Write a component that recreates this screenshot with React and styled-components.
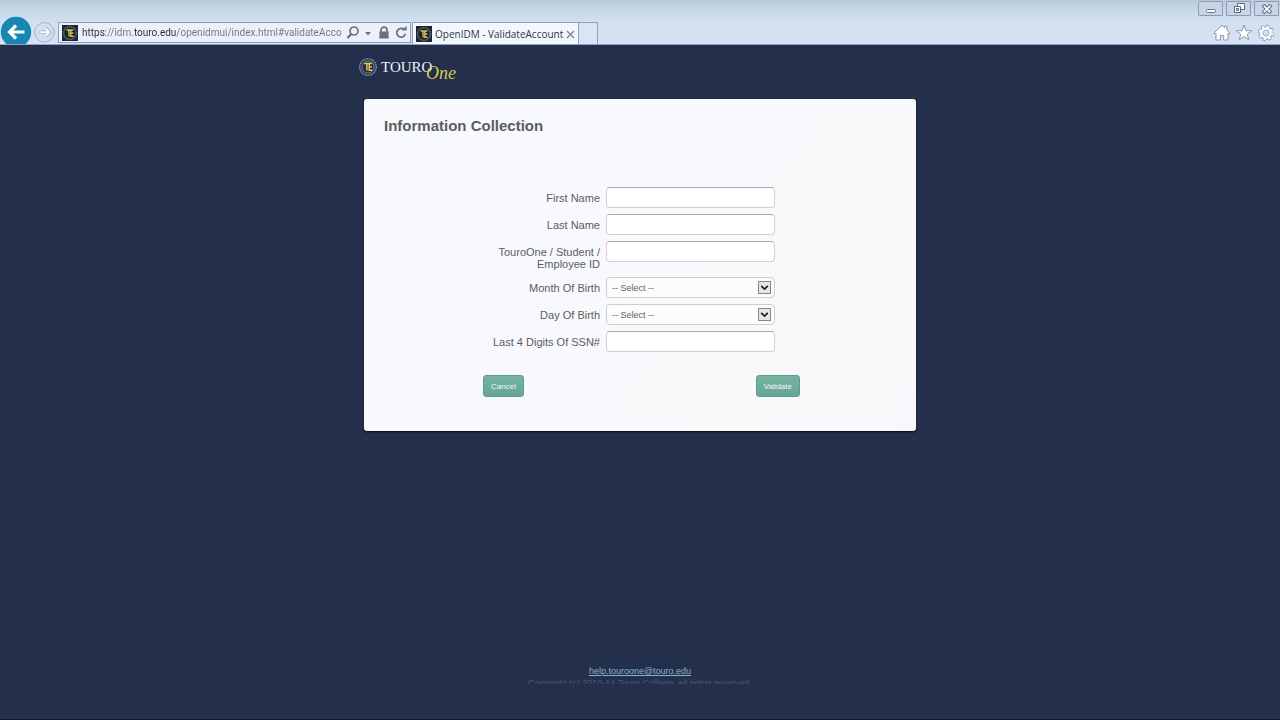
import React from 'react';
import styled, { createGlobalStyle } from 'styled-components';

const GlobalStyle = createGlobalStyle`
  * {
    box-sizing: border-box;
  }

  body {
    margin: 0;
    background: #232f4b;
    font-family: "Liberation Sans", Arial, sans-serif;
  }
`

const Screen = styled.div`
  display: flex;
  flex-direction: column;
  min-height: 100vh;
  border-bottom: 1px solid #101a2a;
`

/* browser frame */

const Chrome = styled.header`
  height: 45px;
  overflow: hidden;
  background: linear-gradient(#b9cadb 0, #c9d8e8 10px, #d3e0f1 24px, #d6e2f5 100%);
  border-bottom: 1px solid #93a3b8;
  font-family: "Open Sans", "Noto Sans", sans-serif;
`

const TitleBar = styled.div`
  display: flex;
  justify-content: flex-end;
  gap: 3px;
  height: 16px;
  padding: 1px 1px 0;
`

const WindowButton = styled.button`
  display: flex;
  align-items: center;
  justify-content: center;
  width: 25px;
  height: 15px;
  padding: 0;
  border: 1px solid #8c9bb0;
  border-radius: 1px;
  background: #c6d4e6;
`

const NavBar = styled.div`
  display: flex;
  align-items: flex-start;
`

const NavButton = styled.button`
  flex: none;
  display: flex;
  padding: 0;
  border: 0;
  background: none;
`

const AddressBar = styled.div`
  display: flex;
  align-items: center;
  gap: 4px;
  width: 353px;
  height: 21px;
  margin: 6px 1px 0 2px;
  padding: 0 2px 0 3px;
  border: 1px solid #8f9fb6;
  background: #eaf1fb;
`

const Url = styled.input`
  flex: 1;
  min-width: 0;
  height: 19px;
  padding: 0;
  border: 0;
  outline: 0;
  font-family: Roboto, sans-serif;
  font-size: 10px;
  color: transparent;
  background: linear-gradient(90deg, #2b2f36 24px, #6f757e 24px, #6f757e 51px, #2b2f36 51px, #2b2f36 94px, #6f757e 94px);
  -webkit-background-clip: text;
  background-clip: text;
`

const Tab = styled.div`
  display: flex;
  align-items: center;
  gap: 3px;
  width: 167px;
  height: 23px;
  margin-top: 6px;
  padding: 0 3px;
  border: 1px solid #8f9fb6;
  border-bottom: 0;
  background: #f2f6fd;
  color: #33373d;
  font-size: 10px;
  white-space: nowrap;
`

const TabTitle = styled.span`
  flex: 1;
`

const NewTab = styled.button`
  width: 19px;
  height: 23px;
  margin-top: 6px;
  border: 1px solid #8f9fb6;
  border-width: 1px 1px 0 0;
  background: #d9e5f6;
`

const Tools = styled.div`
  display: flex;
  gap: 4px;
  margin: 8px 5px 0 auto;
`

/* page */

const Main = styled.main`
  flex: 1;
  width: 552px;
  max-width: 100%;
  margin: 0 auto;
`

const Brand = styled.a`
  display: block;
  height: 27px;
  margin: 11px 0 16px -6px;
`

const Card = styled.section`
  padding: 20px 20px 34px;
  border-radius: 3px;
  background: linear-gradient(125deg, #f8f9fd 50%, #f9f9fa 75%, #f8f8fc 100%);
  box-shadow: 0 1px 2px #05080f;
`

const Title = styled.h1`
  margin: 0 0 54px;
  color: #5a5d63;
  font-size: 15px;
  line-height: 14px;
`

const Form = styled.form`
  display: grid;
  gap: 6px;
  width: 320px;
  margin: 0 auto;
`

const Row = styled.div`
  display: grid;
  grid-template-columns: 120px 169px;
  column-gap: 6px;
  align-items: start;
`

const Label = styled.label`
  padding: 5px 0 1px;
  color: #5a5d63;
  font-size: 11px;
  line-height: 12px;
  text-align: right;
`

const TextBox = styled.input`
  width: 100%;
  height: 21px;
  padding: 0 5px;
  border: 1px solid #dccbd2;
  border-top-color: #aaa9ac;
  border-radius: 4px;
  background: #fff;
  font-size: 9px;
`

const SelectWrap = styled.div`
  position: relative;
`

const SelectBox = styled.select`
  display: block;
  appearance: none;
  width: 100%;
  height: 21px;
  padding: 0 5px;
  border: 1px solid #cfcdd2;
  border-radius: 4px;
  background: #fdfcfd;
  color: #5f6165;
  font-family: inherit;
  font-size: 9px;
`

const SelectArrow = styled.svg`
  position: absolute;
  top: 4px;
  right: 4px;
  pointer-events: none;
`

const Actions = styled.div`
  display: flex;
  justify-content: space-between;
  margin-top: 17px;
  padding-left: 3px;
`

const ActionButton = styled.button`
  height: 22px;
  padding: 0 7px;
  border: 1px solid #5f9c8c;
  border-radius: 3px;
  background: linear-gradient(#76b3a2, #67a594);
  color: #f1faf7;
  font-family: inherit;
  font-size: 8px;
`

const Footer = styled.footer`
  padding-bottom: 35px;
  font-size: 9px;
  line-height: 12px;
  text-align: center;
`

const HelpLink = styled.a`
  color: #8fb0c8;
`

const Copyright = styled.p`
  height: 7px;
  margin: 0;
  overflow: hidden;
  color: #485a75;
`

const Icon = styled.svg`
  flex: none;
`

const SiteIcon = () =>
  <Icon width="16" height="16" viewBox="0 0 16 16" aria-hidden="true">
    <rect width="16" height="16" fill="#1c2430"/>
    <circle cx="8" cy="8" r="6.4" fill="none" stroke="#5d6a7c" strokeWidth="1.6" strokeDasharray="1.4 .6"/>
    <circle cx="8" cy="8" r="4.8" fill="#1a202b"/>
    <path d="M4.6 5h6.8M7 5v6.4M11.4 8H8.8M8.8 5v6.2h2.8" fill="none" stroke="#d8c04a" strokeWidth="1.4"/>
  </Icon>

const BackIcon = () =>
  <Icon width="32" height="32" viewBox="0 0 32 32" aria-hidden="true">
    <circle cx="16" cy="16" r="15.2" fill="#1686b3"/>
    <path d="M24.5 16H10M16 9.5L9.5 16l6.5 6.5" fill="none" stroke="#fff" strokeWidth="3.2"/>
  </Icon>

const ForwardIcon = () =>
  <Icon width="24" height="32" viewBox="0 0 24 32" aria-hidden="true">
    <circle cx="12.5" cy="16.3" r="9.8" fill="#d3dfef" stroke="#a3b1c4"/>
    <path d="M7 16.3h10M13 11.8l4.5 4.5-4.5 4.5" fill="none" stroke="#a3b1c4" strokeWidth="3.6"/>
    <path d="M7.5 16.3h9M13 12l4.2 4.3-4.2 4.3" fill="none" stroke="#f6f9fd" strokeWidth="2"/>
  </Icon>

const AddressIcons = () =>
  <Icon width="62" height="16" viewBox="0 0 62 16" aria-hidden="true">
    <g fill="none" stroke="#6b717b" strokeWidth="1.7">
      <circle cx="8" cy="6" r="4"/>
      <path d="M5.2 9L1.5 13" strokeWidth="2.4"/>
      <path d="M35 7V5.2a3 3 0 0 1 6 0V7"/>
      <path d="M58.2 4.6a4.4 4.4 0 1 0 1.2 4.2"/>
    </g>
    <path d="M19 7h6l-3 3.4zM33.4 6.6h9.2v7h-9.2zM55.6 5.6h5V.8z" fill="#6b717b"/>
  </Icon>

const Logo = () =>
  <svg width="104" height="27" viewBox="0 0 104 27" role="img" aria-label="TouroOne">
    <circle cx="10" cy="11" r="8.3" fill="#2c3752" stroke="#93a0b5" strokeWidth="1.1" strokeDasharray="1.6 .6"/>
    <circle cx="10" cy="11" r="6" fill="#202b45" stroke="#8491a8" strokeWidth=".8"/>
    <path d="M6.2 7.6h7.6M8.9 7.6v7M13.8 11h-2.6M11.2 7.6v6.6h3" fill="none" stroke="#e4cd4b" strokeWidth="1.5"/>
    <text x="23" y="16" fill="#eef2f8" fontFamily="Liberation Serif, serif" fontSize="15">TOURO</text>
    <text x="68" y="23" fill="#cfca5c" fontFamily="Liberation Serif, serif" fontStyle="italic" fontSize="18">One</text>
  </svg>

const fields = [
  {id: 'firstName', label: 'First Name'},
  {id: 'lastName', label: 'Last Name'},
  {id: 'studentId', label: 'TouroOne / Student / Employee ID'},
  {id: 'birthMonth', label: 'Month Of Birth', options: 12},
  {id: 'birthDay', label: 'Day Of Birth', options: 31},
  {id: 'ssn', label: 'Last 4 Digits Of SSN#'}
]

const Select = ({id, count}) =>
  <SelectWrap>
    <SelectBox id={id} defaultValue="">
      <option value="">-- Select --</option>
      {Array.from({length: count}, (_, i) => <option key={i} value={i + 1}>{i + 1}</option>)}
    </SelectBox>
    <SelectArrow width="13" height="13" viewBox="0 0 13 13" aria-hidden="true">
      <rect x=".5" y=".5" width="12" height="12" fill="#e6e6e8" stroke="#85868a"/>
      <path d="M3.2 4.8l3.3 3.3 3.3-3.3" fill="none" stroke="#1d1d1f" strokeWidth="1.7"/>
    </SelectArrow>
  </SelectWrap>

const Browser = () =>
  <Chrome>
    <TitleBar>
      <WindowButton aria-label="Minimize">
        <svg width="12" height="10"><rect x="1.5" y="5.5" width="9" height="3" rx="1" fill="#fff" stroke="#68758a"/></svg>
      </WindowButton>
      <WindowButton aria-label="Restore">
        <svg width="12" height="11" fill="#fff" stroke="#59667b">
          <path d="M4.5.5h7v6h-7z"/>
          <path d="M1.5 3.5h6v6h-6z"/>
          <path d="M3.5 5.5h2v2h-2z"/>
        </svg>
      </WindowButton>
      <WindowButton aria-label="Close">
        <svg width="12" height="10" fill="none">
          <path d="M2 1l8 8M10 1L2 9" stroke="#59667b" strokeWidth="3.8"/>
          <path d="M2.6 1.6l6.8 6.8M9.4 1.6L2.6 8.4" stroke="#fff" strokeWidth="1.8"/>
        </svg>
      </WindowButton>
    </TitleBar>
    <NavBar>
      <NavButton aria-label="Back"><BackIcon/></NavButton>
      <NavButton aria-label="Forward"><ForwardIcon/></NavButton>
      <AddressBar>
        <SiteIcon/>
        <Url aria-label="Address" defaultValue="https://idm.touro.edu/openidmui/index.html#validateAcco"/>
        <AddressIcons/>
      </AddressBar>
      <Tab>
        <SiteIcon/>
        <TabTitle>OpenIDM - ValidateAccount</TabTitle>
        <NavButton aria-label="Close tab">
          <svg width="9" height="9"><path d="M1 1l7 7M8 1L1 8" stroke="#858b95" strokeWidth="1.5"/></svg>
        </NavButton>
      </Tab>
      <NewTab aria-label="New tab"/>
      <Tools>
        <NavButton aria-label="Home">
          <svg width="18" height="18" viewBox="0 0 18 18" fill="#fff" stroke="#8d99ab">
            <path d="M9 1.2l2.5 2.4V2.2h2.3v3.6L17 9l-1 1-1-.8v6.8h-4.3v-4.6H7.3V16H3V9.2l-1 .8-1-1z"/>
          </svg>
        </NavButton>
        <NavButton aria-label="Favorites">
          <svg width="18" height="18" viewBox="0 0 18 18" fill="#fff" stroke="#8d99ab">
            <path d="M9 1.2l2 5.4 5.7.2-4.5 3.5 1.6 5.5L9 12.6l-4.8 3.2 1.6-5.5L1.3 6.8 7 6.6z"/>
          </svg>
        </NavButton>
        <NavButton aria-label="Settings">
          <svg width="18" height="18" viewBox="0 0 18 18" fill="none">
            <circle cx="9" cy="9" r="6.6" stroke="#8d99ab" strokeWidth="3.2" strokeDasharray="3 2.18"/>
            <circle cx="9" cy="9" r="4.7" stroke="#8d99ab" strokeWidth="4"/>
            <circle cx="9" cy="9" r="6.4" stroke="#fff" strokeWidth="2" strokeDasharray="2.2 2.83"/>
            <circle cx="9" cy="9" r="4.6" stroke="#fff" strokeWidth="2.4"/>
          </svg>
        </NavButton>
      </Tools>
    </NavBar>
  </Chrome>

export default function App() {
  return (
    <Screen>
      <GlobalStyle/>
      <Browser/>
      <Main>
        <Brand href="#"><Logo/></Brand>
        <Card>
          <Title>Information Collection</Title>
          <Form onSubmit={(e) => e.preventDefault()}>
            {fields.map((field) => <Row key={field.id}>
              <Label htmlFor={field.id}>{field.label}</Label>
              {field.options
              ? <Select id={field.id} count={field.options}/>
              : <TextBox id={field.id} type="text"/>}
            </Row>)}
            <Actions>
              <ActionButton type="button">Cancel</ActionButton>
              <ActionButton type="submit">Validate</ActionButton>
            </Actions>
          </Form>
        </Card>
      </Main>
      <Footer>
        <HelpLink href="mailto:help.touroone@touro.edu">help.touroone@touro.edu</HelpLink>
        <Copyright>Copyright (c) 2010-14 Touro College, all rights reserved.</Copyright>
      </Footer>
    </Screen>
  )
}
